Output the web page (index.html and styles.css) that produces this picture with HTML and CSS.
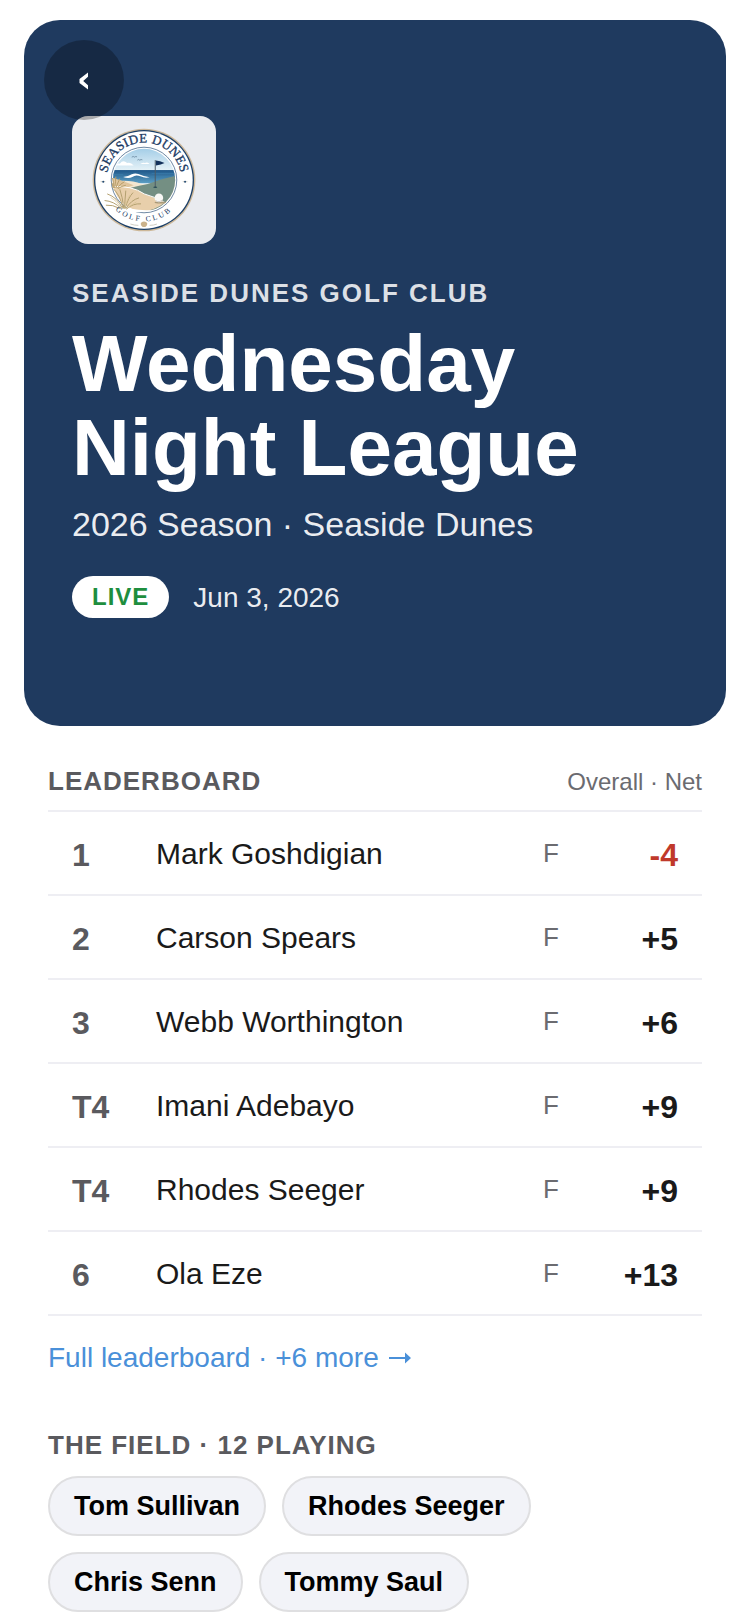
FILE: index.html
```html
<!DOCTYPE html>
<html lang="en">
<head>
<meta charset="utf-8">
<meta name="viewport" content="width=device-width, initial-scale=1">
<title>Wednesday Night League</title>
<link rel="stylesheet" href="styles.css">
</head>
<body>
<header class="hero">
  <button class="back" type="button" aria-label="Back">
    <svg class="back-icon" viewBox="0 0 10 18" aria-hidden="true"><path d="M9 0.5L0.5 7V11L9 17.5V13.2L4.2 9L9 4.8z" fill="currentColor"/></svg>
  </button>
  <div class="logo">
    <svg class="logo-art" viewBox="20 23 314 314" role="img" aria-label="Seaside Dunes Golf Club logo">
      <defs>
        <linearGradient id="sky" x1="0" y1="0" x2="0" y2="1">
          <stop offset="0" stop-color="#9fcbe6"/>
          <stop offset="1" stop-color="#e6f2f7"/>
        </linearGradient>
        <linearGradient id="sea" x1="0" y1="0" x2="0" y2="1">
          <stop offset="0" stop-color="#1d5689"/>
          <stop offset="1" stop-color="#5d9fc4"/>
        </linearGradient>
        <clipPath id="scene"><circle cx="177" cy="180" r="94"/></clipPath>
        <path id="arc-top" d="M82 241A113 113 0 1 1 272 241"/>
        <path id="arc-bottom" d="M52 180A125 125 0 0 0 302 180"/>
      </defs>
      <circle cx="177" cy="180" r="155" fill="#cdb899"/>
      <circle cx="177" cy="180" r="151" fill="#1b3f68"/>
      <circle cx="177" cy="180" r="147" fill="#fff"/>
      <circle cx="177" cy="180" r="99" fill="none" stroke="#234a73" stroke-width="2"/>
      <g clip-path="url(#scene)">
        <rect x="80" y="80" width="200" height="72" fill="url(#sky)"/>
        <path d="M88 136q8-8 16-5q10-14 22-2q10-4 20 7zM166 132q8-6 14-3q8-5 14 3z" fill="#fff"/>
        <rect x="80" y="150" width="200" height="40" fill="url(#sea)"/>
        <path d="M80 164h34M200 160h72M196 170h76M80 172h30" stroke="#3b80ad" stroke-width="2"/>
        <path d="M114 171q16-2 26-8q10-5 20-1q18 8 34 10q-14 4-28-3q-14-6-24 2q-12 6-28 0z" fill="#fff"/>
        <path d="M80 186q50-9 90 6q40 4 104-18v100H80z" fill="#f3e6d0"/>
        <path d="M128 206q28-8 60-14q46-18 90-26v110h-80q-30-50-70-70z" fill="#748f83"/>
        <path d="M80 172q34 10 66 24q-30 14-66 8z" fill="#dfc49c"/>
        <path d="M80 200q60-4 98 22q36 12 62 26q-30 24-70 28H80z" fill="#e8cfab"/>
        <path d="M80 200q60-4 98 22q30 8 62 26" fill="none" stroke="#fff" stroke-width="3"/>
      </g>
      <path d="M88 264q20-6 40 0q26 8 80 8q-60 14-120-8z" fill="#fff"/>
      <path d="M140 111q5-4 8 0q4-3 8-1M157 120q5-4 7 0q4-3 8-1" fill="none" stroke="#56758d" stroke-width="2"/>
      <path d="M211 120v82" stroke="#4d5c67" stroke-width="3"/>
      <path d="M213 121q12 0 26 8q-10 6-26 7z" fill="#12305a"/>
      <ellipse cx="211" cy="202" rx="6" ry="2" fill="#294c57"/>
      <ellipse cx="226" cy="248" rx="17" ry="3" fill="#a89978"/>
      <circle cx="222" cy="234" r="13" fill="#f8f8f6"/>
      <path d="M212 242q10 8 22-3" fill="none" stroke="#d0cdc6" stroke-width="3"/>
      <path d="M84 204q2-18-2-30M88 204q4-20 4-34M92 204q6-16 12-28M96 205q10-14 22-20M98 206q12-8 24-10M84 204q-2-10-4-16" fill="none" stroke="#b59c68" stroke-width="3"/>
      <path d="M112 266Q96 232 66 222M114 266Q104 224 84 206M116 266Q112 230 104 208M118 266Q120 236 122 212M120 266Q130 232 144 218M122 267Q138 240 162 234M124 268Q144 250 168 252M108 266Q86 244 58 242M104 266Q82 254 62 256" fill="none" stroke="#b3a070" stroke-width="3"/>
      <path d="M110 266Q92 240 76 232M118 266Q126 240 134 226M124 268Q140 254 154 246" fill="none" stroke="#d3c08f" stroke-width="2"/>
      <text class="logo-name"><textPath href="#arc-top" startOffset="50%">SEASIDE DUNES</textPath></text>
      <text class="logo-kind"><textPath href="#arc-bottom" startOffset="50%">GOLF CLUB</textPath></text>
      <path d="M46 185h14M294 185h14M136 313q12 4 24 4M194 317q12 0 22-4" fill="none" stroke="#b9b4a6" stroke-width="2"/>
      <circle cx="54" cy="185" r="3" fill="#234a73"/>
      <circle cx="301" cy="185" r="3" fill="#234a73"/>
      <path d="M177 305q9 0 10 8q-1 6-6 9h-8q-5-3-6-9q1-8 10-8z" fill="#cbb28b"/>
    </svg>
  </div>
  <p class="club">SEASIDE DUNES GOLF CLUB</p>
  <h1 class="title">Wednesday<br>Night League</h1>
  <p class="season">2026 Season · Seaside Dunes</p>
  <div class="status">
    <span class="live">LIVE</span>
    <time class="date" datetime="2026-06-03">Jun 3, 2026</time>
  </div>
</header>
<main class="content">
  <section>
    <div class="board-head">
      <h2 class="section-title">LEADERBOARD</h2>
      <span class="board-mode">Overall · Net</span>
    </div>
    <table class="board">
      <tbody>
        <tr><td class="rank">1</td><td class="name">Mark Goshdigian</td><td class="thru">F</td><td class="score under">-4</td></tr>
        <tr><td class="rank">2</td><td class="name">Carson Spears</td><td class="thru">F</td><td class="score">+5</td></tr>
        <tr><td class="rank">3</td><td class="name">Webb Worthington</td><td class="thru">F</td><td class="score">+6</td></tr>
        <tr><td class="rank">T4</td><td class="name">Imani Adebayo</td><td class="thru">F</td><td class="score">+9</td></tr>
        <tr><td class="rank">T4</td><td class="name">Rhodes Seeger</td><td class="thru">F</td><td class="score">+9</td></tr>
        <tr><td class="rank">6</td><td class="name">Ola Eze</td><td class="thru">F</td><td class="score">+13</td></tr>
      </tbody>
    </table>
    <a class="more" href="#">Full leaderboard · +6 more
      <svg class="more-arrow" viewBox="0 0 24 12" aria-hidden="true"><path d="M1 5H17V0.5L23 6L17 11.5V7H1z" fill="currentColor"/></svg>
    </a>
  </section>
  <section class="field">
    <h2 class="section-title">THE FIELD · 12 PLAYING</h2>
    <ul class="chips">
      <li class="chip">Tom Sullivan</li>
      <li class="chip">Rhodes Seeger</li>
      <li class="chip">Chris Senn</li>
      <li class="chip">Tommy Saul</li>
    </ul>
  </section>
</main>
</body>
</html>
```
FILE: styles.css
```css
* {
  box-sizing: border-box;
}

body {
  margin: 0;
  background: #fff;
  color: #1a1a1a;
  font-family: "Liberation Sans", Arial, sans-serif;
}

h1, h2, p, ul {
  margin: 0;
  padding: 0;
}

.hero {
  position: relative;
  margin: 20px 24px 0;
  padding: 96px 48px 108px;
  border-radius: 36px;
  background: #1f3a5f;
  color: #fff;
}

.back {
  position: absolute;
  top: 20px;
  left: 20px;
  display: flex;
  align-items: center;
  justify-content: center;
  width: 80px;
  height: 80px;
  padding: 2px 0 0;
  border: 0;
  border-radius: 50%;
  background: rgba(0, 0, 0, 0.28);
  color: #fff;
  cursor: pointer;
}

.back-icon {
  width: 10px;
  height: 18px;
}

.logo {
  display: flex;
  align-items: center;
  justify-content: center;
  width: 144px;
  height: 128px;
  border-radius: 16px;
  background: #e9ebef;
}

.logo-art {
  width: 104px;
  height: 104px;
}

.logo-name,
.logo-kind {
  fill: #1b3a63;
  font-family: "Liberation Serif", serif;
  text-anchor: middle;
}

.logo-name {
  stroke: #1b3a63;
  stroke-width: 1;
  font-size: 39px;
  letter-spacing: 1px;
}

.logo-kind {
  font-size: 23px;
  letter-spacing: 7px;
}

.club {
  margin-top: 34px;
  color: rgba(255, 255, 255, 0.85);
  font-size: 26px;
  font-weight: bold;
  line-height: 30px;
  letter-spacing: 2px;
}

.title {
  margin-top: 14px;
  font-size: 80px;
  line-height: 84px;
}

.season {
  margin-top: 14px;
  color: rgba(255, 255, 255, 0.92);
  font-size: 34px;
  line-height: 40px;
}

.status {
  display: flex;
  align-items: center;
  gap: 24px;
  margin-top: 32px;
}

.live {
  padding: 6px 20px;
  border-radius: 21px;
  background: #fff;
  color: #1e8e3e;
  font-size: 24px;
  font-weight: bold;
  line-height: 30px;
  letter-spacing: 1px;
}

.date {
  padding-top: 2px;
  color: rgba(255, 255, 255, 0.92);
  font-size: 28px;
}

.content {
  padding: 40px 48px 12px;
}

.board-head {
  display: flex;
  align-items: baseline;
  justify-content: space-between;
  padding-bottom: 14px;
  border-bottom: 2px solid #eeeef3;
}

.section-title {
  color: #5a5a5e;
  font-size: 26px;
  line-height: 30px;
  letter-spacing: 1px;
}

.board-mode {
  color: #6b6b70;
  font-size: 24px;
}

.board {
  width: 100%;
  border-collapse: separate;
  border-spacing: 0;
}

.board td {
  height: 84px;
  padding: 0;
  border-bottom: 2px solid #eeeef3;
  vertical-align: middle;
}

.board .rank {
  width: 108px;
  padding: 4px 0 0 24px;
  color: #5a5a5e;
  font-size: 32px;
  font-weight: bold;
}

.board .name {
  padding-top: 2px;
  font-size: 30px;
}

.board .thru {
  color: #6b6b70;
  font-size: 26px;
  text-align: right;
}

.board .score {
  width: 143px;
  padding: 4px 24px 0 0;
  font-size: 32px;
  font-weight: bold;
  text-align: right;
}

.board .under {
  color: #c0392b;
}

.more {
  display: flex;
  align-items: center;
  gap: 9px;
  margin-top: 26px;
  color: #4a90d9;
  font-size: 28px;
  line-height: 32px;
  text-decoration: none;
}

.more-arrow {
  width: 24px;
  height: 12px;
}

.field {
  margin-top: 56px;
}

.chips {
  display: flex;
  flex-wrap: wrap;
  gap: 16px;
  max-width: 560px;
  margin-top: 16px;
  list-style: none;
}

.chip {
  padding: 13px 24px;
  border: 2px solid #dfdfe1;
  border-radius: 30px;
  background: #f2f3f8;
  color: #000;
  font-size: 27px;
  font-weight: bold;
  line-height: 30px;
}
```
